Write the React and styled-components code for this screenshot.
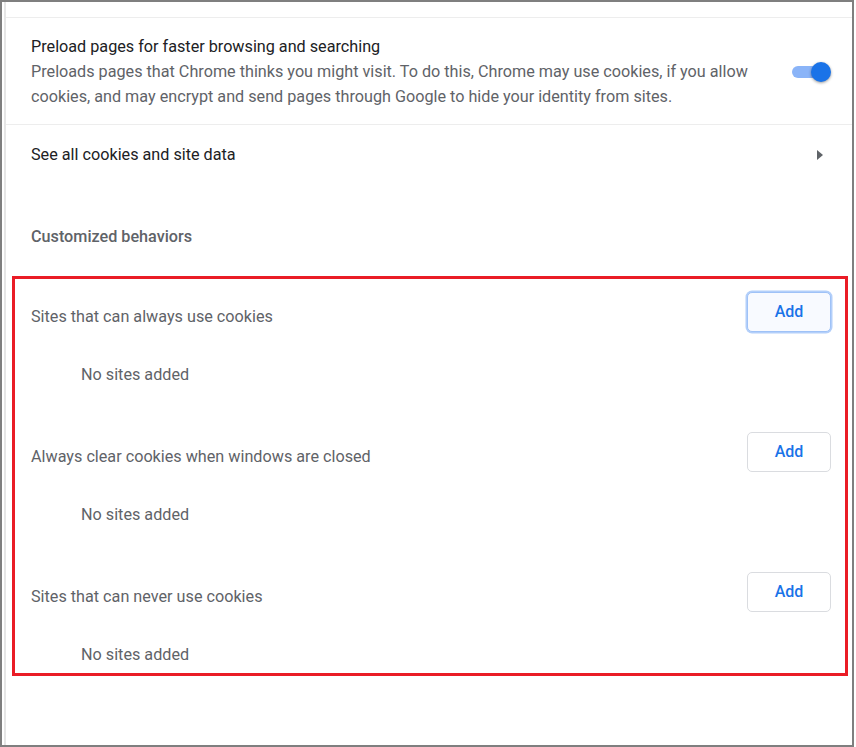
import React from "react";
import styled, { createGlobalStyle } from "styled-components";

const Global = createGlobalStyle`
  html, body { margin: 0; padding: 0; background: #ffffff; }
  body { font-family: Roboto, "Noto Sans", "Liberation Sans", sans-serif; }
  * { box-sizing: border-box; }
`;

const Frame = styled.div`
  width: 854px;
  height: 747px;
  border: 2px solid #7f7f7f;
  padding-left: 2px;
  background: #fff;
  overflow: hidden;
`;

const Card = styled.div`
  height: 100%;
  border-left: 2px solid #e6e6e6;
  padding-top: 15px;
`;

const PreloadRow = styled.div`
  display: flex;
  align-items: center;
  border-top: 1px solid #ededed;
  border-bottom: 1px solid #ededed;
  padding: 16px 21px 15px 25px;
`;

const TextBlock = styled.div`
  flex: 1;
  padding-right: 30px;
`;

const Title = styled.div`
  font-size: 16.2px;
  line-height: 25px;
  color: #202124;
`;

const Secondary = styled.div`
  font-size: 16.2px;
  line-height: 25px;
  color: #5f6368;
`;

const Toggle = styled.div`
  position: relative;
  width: 39px;
  height: 20px;
  flex: none;
  margin-top: 1px;
`;

const Track = styled.div`
  position: absolute;
  left: 0;
  top: 4px;
  width: 34px;
  height: 12px;
  border-radius: 6px;
  background: #8ab4f8;
`;

const Knob = styled.div`
  position: absolute;
  right: 0;
  top: 0;
  width: 20px;
  height: 20px;
  border-radius: 50%;
  background: #1a73e8;
  box-shadow: 0 1px 3px rgba(0, 0, 0, 0.4);
`;

const LinkRow = styled.div`
  display: flex;
  align-items: center;
  justify-content: space-between;
  height: 59px;
  padding: 0 29px 0 25px;
  font-size: 16.2px;
  color: #202124;
`;

const Arrow = styled.span`
  width: 0;
  height: 0;
  border-top: 5px solid transparent;
  border-bottom: 5px solid transparent;
  border-left: 6px solid #5f6368;
`;

const SectionHeading = styled.div`
  margin-top: 40px;
  padding-left: 25px;
  font-size: 16.2px;
  line-height: 25px;
  font-weight: 500;
  color: #5f6368;
`;

const Highlight = styled.div`
  margin: 27px 4px 0 6px;
  border: 3px solid #ea1c26;
  padding: 0 14px 6px 16px;
  display: flex;
  flex-direction: column;
  gap: 32px;
`;

const Block = styled.div`
  display: flex;
  flex-direction: column;
`;

const HeaderRow = styled.div`
  display: flex;
  justify-content: space-between;
  align-items: flex-start;
  padding-top: 13px;
`;

const Label = styled.div`
  margin-top: 12px;
  font-size: 16.2px;
  line-height: 25px;
  color: #5f6368;
`;

const AddButton = styled.button`
  width: 84px;
  height: 40px;
  border-radius: 5px;
  border: 1px solid ${(p) => (p.$focused ? "#9fc2f7" : "#dadce0")};
  box-shadow: ${(p) => (p.$focused ? "0 0 0 1.5px #b3cffa" : "none")};
  background: ${(p) => (p.$focused ? "#f8faff" : "#ffffff")};
  color: #1a73e8;
  font-family: Roboto, "Noto Sans", "Liberation Sans", sans-serif;
  font-size: 16px;
  font-weight: 500;
  padding: 0 0 2px;
  cursor: pointer;
`;

const EmptyRow = styled.div`
  padding-top: 30px;
  padding-left: 50px;
  font-size: 16.2px;
  line-height: 25px;
  color: #5f6368;
`;

const lists = [
  { label: "Sites that can always use cookies", focused: true },
  { label: "Always clear cookies when windows are closed", focused: false },
  { label: "Sites that can never use cookies", focused: false },
];

export default function App() {
  return (
    <>
      <Global />
      <Frame>
        <Card>
          <PreloadRow>
            <TextBlock>
              <Title>Preload pages for faster browsing and searching</Title>
              <Secondary>
                Preloads pages that Chrome thinks you might visit. To do this, Chrome may use cookies, if you allow
                cookies, and may encrypt and send pages through Google to hide your identity from sites.
              </Secondary>
            </TextBlock>
            <Toggle>
              <Track />
              <Knob />
            </Toggle>
          </PreloadRow>
          <LinkRow>
            <span>See all cookies and site data</span>
            <Arrow />
          </LinkRow>
          <SectionHeading>Customized behaviors</SectionHeading>
          <Highlight>
            {lists.map((l) => (
              <Block key={l.label}>
                <HeaderRow>
                  <Label>{l.label}</Label>
                  <AddButton $focused={l.focused}>Add</AddButton>
                </HeaderRow>
                <EmptyRow>No sites added</EmptyRow>
              </Block>
            ))}
          </Highlight>
        </Card>
      </Frame>
    </>
  );
}
